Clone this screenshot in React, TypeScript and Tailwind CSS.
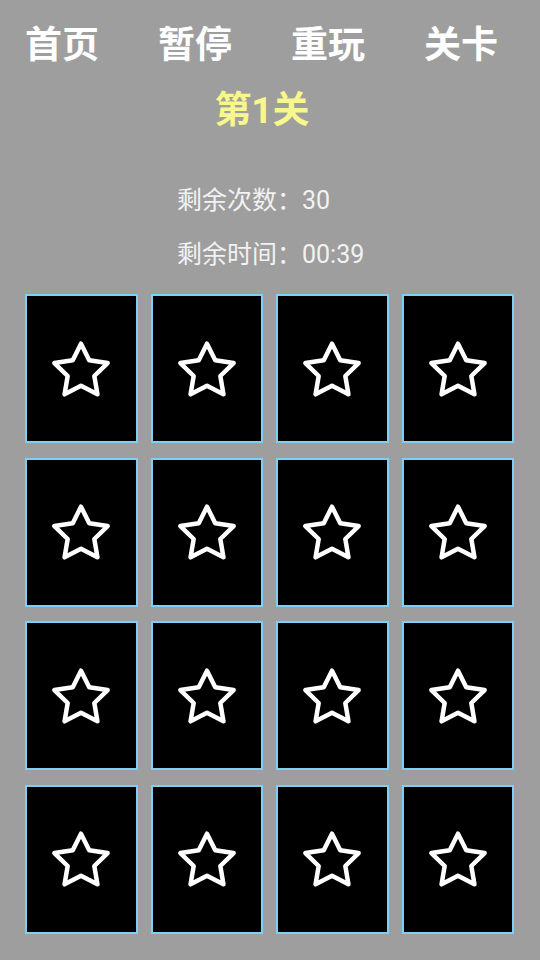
const navItems = ['首页', '暂停', '重玩', '关卡'];
const cards = Array.from({ length: 16 }, (_, i) => i);

function StarOutline() {
  return (
    <svg width="64" height="64" viewBox="0 0 64 64" fill="none">
      <polygon
        points="32,6.67 40.23,23.34 58.63,26.02 45.32,39 48.46,57.32 32,48.67 15.54,57.32 18.68,39 5.37,26.02 23.77,23.34"
        stroke="white"
        strokeWidth="4.5"
        strokeLinejoin="round"
      />
    </svg>
  );
}

export default function App() {
  return (
    <main
      className="w-[540px] h-[960px] bg-[#9e9e9e] overflow-hidden"
      style={{ fontFamily: 'Roboto, "Noto Sans CJK SC", sans-serif' }}
    >
      {/* top nav */}
      <nav className="flex pt-[27px] pl-[25px] gap-[59px]">
        {navItems.map((t) => (
          <span key={t} className="text-[37px] leading-[37px] font-bold text-white">
            {t}
          </span>
        ))}
      </nav>

      {/* level title */}
      <h1 className="mt-[28px] pr-[16px] text-center text-[37px] leading-[37px] font-bold text-[#f7f78c]">
        第1关
      </h1>

      {/* stats */}
      <div className="mt-[59px] pl-[177px] flex flex-col gap-[29px] text-[25px] leading-[25px] text-[#f2f2f2]">
        <p>剩余次数：30</p>
        <p>剩余时间：00:39</p>
      </div>

      {/* card grid */}
      <div className="mt-[27px] pl-[25px] pr-[26px] grid grid-cols-4 gap-x-[13px] gap-y-[14.5px]">
        {cards.map((i) => (
          <div
            key={i}
            className="h-[149px] bg-black border-2 border-[#7ccff5] flex items-center justify-center"
          >
            <StarOutline />
          </div>
        ))}
      </div>
    </main>
  );
}
